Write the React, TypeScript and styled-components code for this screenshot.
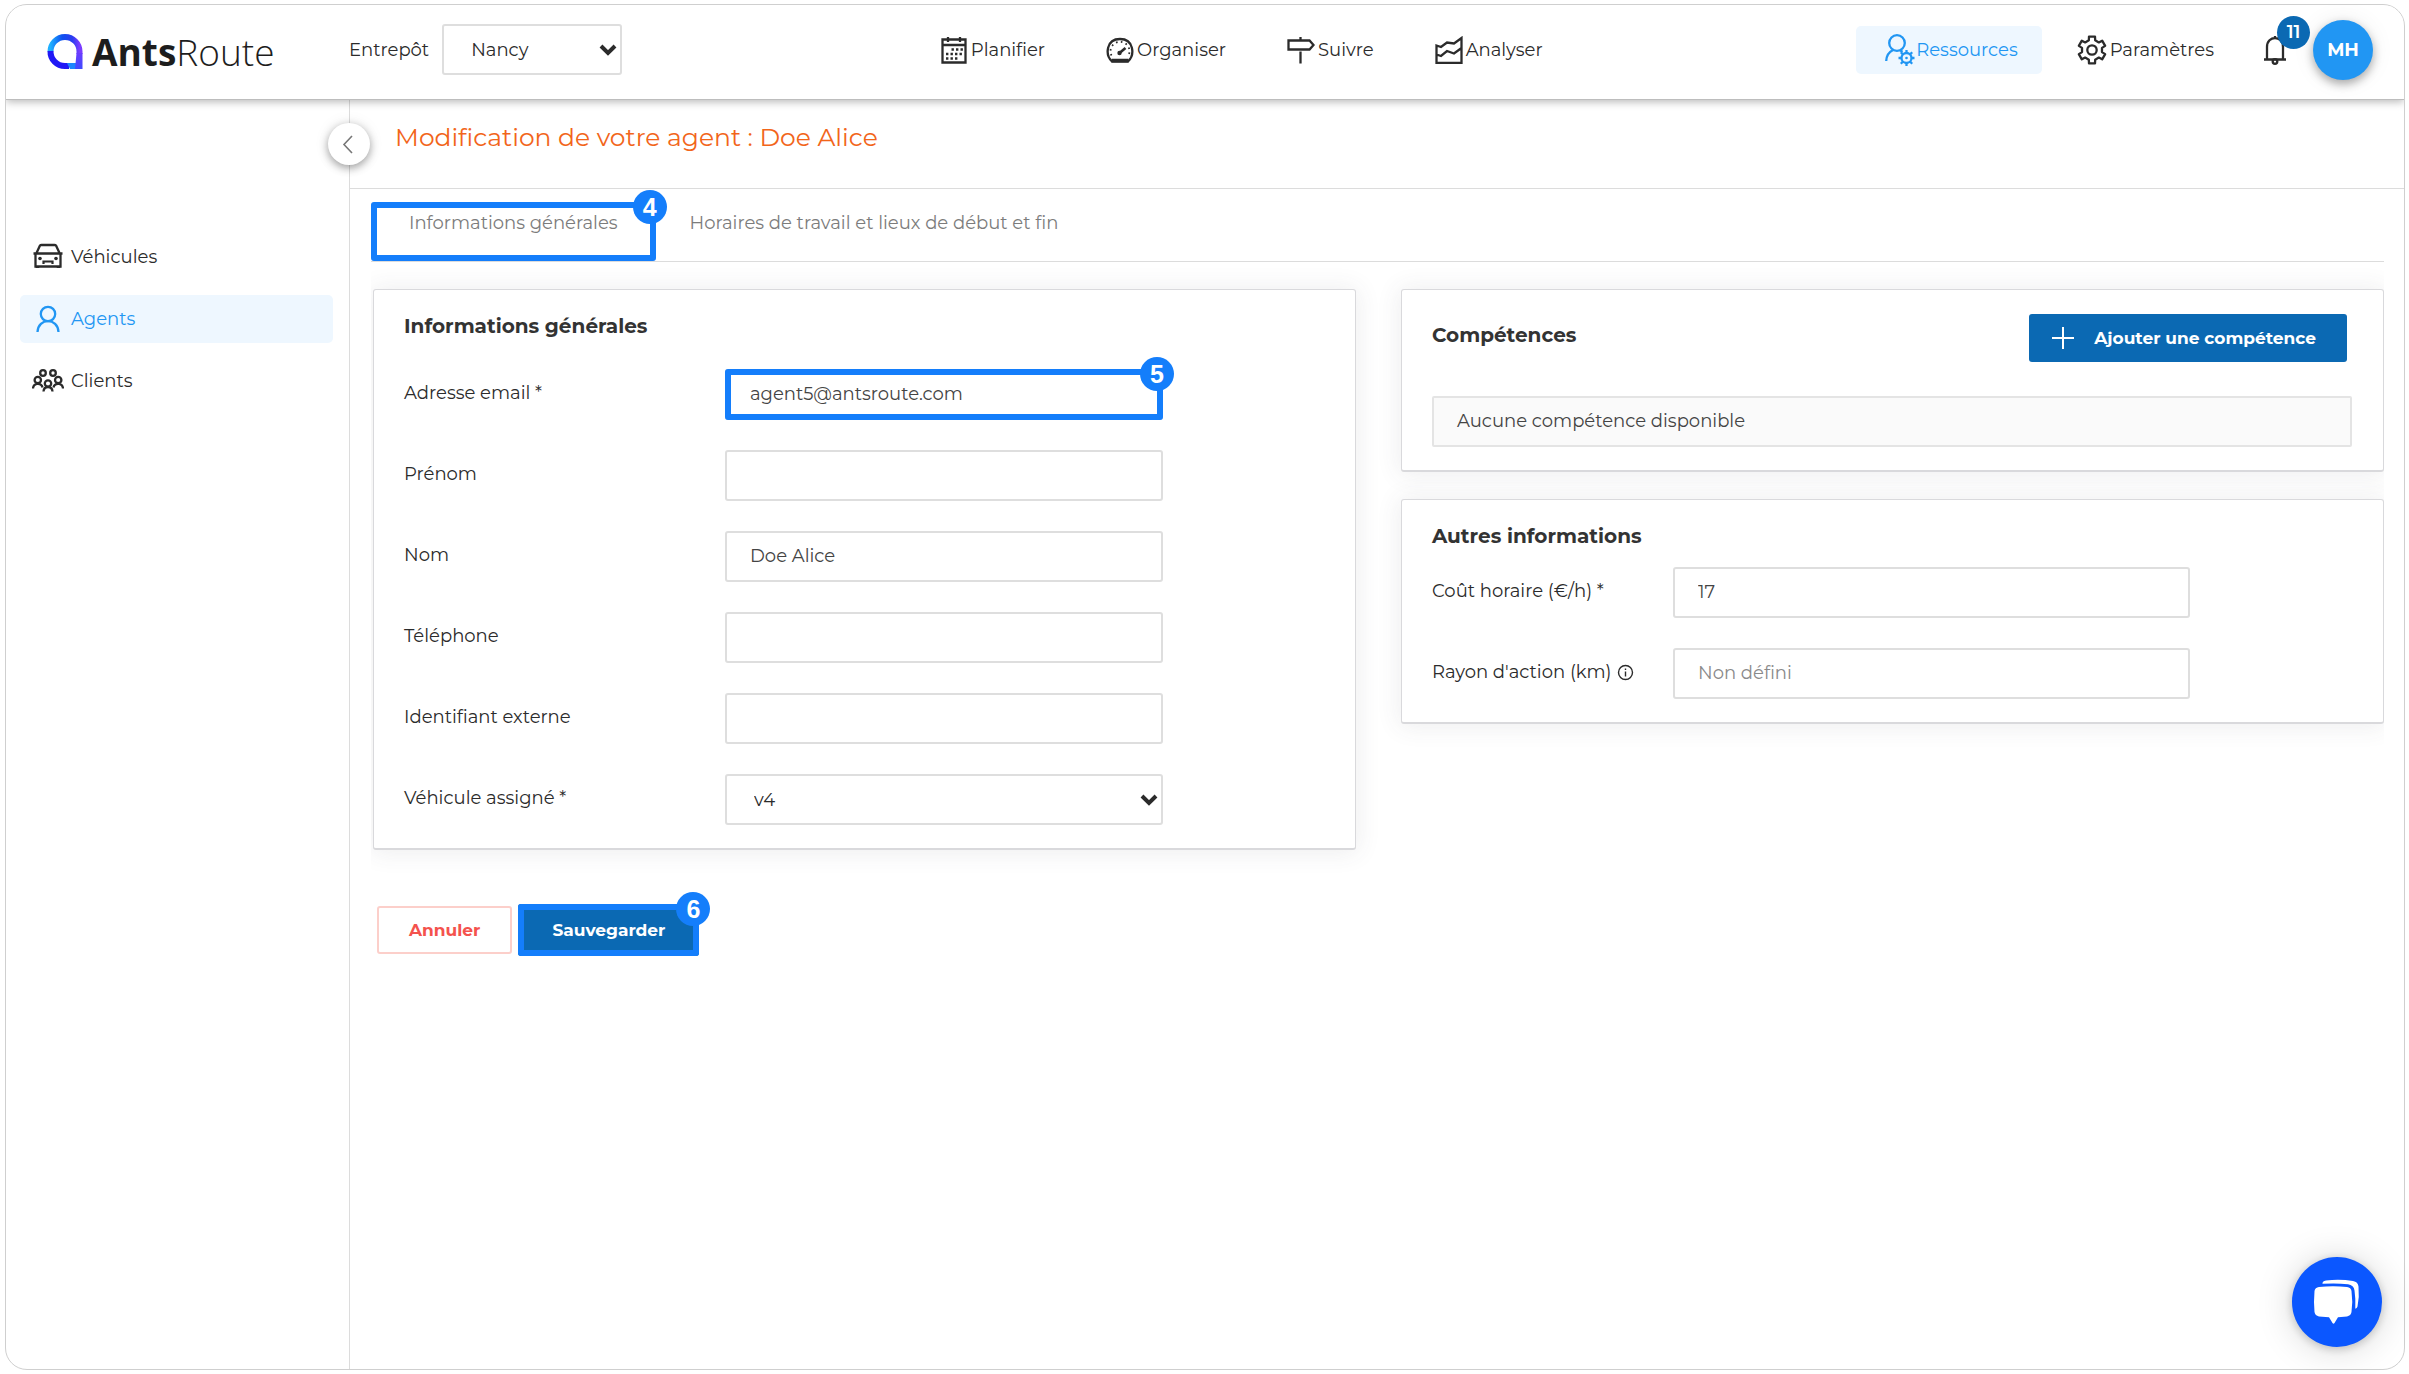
import React from 'react';
import styled, { createGlobalStyle, css } from 'styled-components';

const color = {
  text: '#2b2b2b',
  muted: '#7c7c7c',
  line: '#dcdcdc',
  accent: '#2196f3',
  accentSoft: '#eef7ff',
  primary: '#0b69b3',
  orange: '#f2651a',
  danger: '#f4524d',
  mark: '#147efb',
};

const GlobalStyle = createGlobalStyle`
  *, *::before, *::after { box-sizing: border-box; }
  body {
    margin: 0;
    background: #fff;
    color: ${color.text};
    font-family: Montserrat, Inter, "Noto Sans", sans-serif;
    font-size: 18px;
    line-height: 24px;
  }
  button, input, select { font: inherit; color: inherit; margin: 0; }
  a { color: inherit; text-decoration: none; }
  h1, h2, ul { margin: 0; padding: 0; }
  ul { list-style: none; }
`;

/* ---------- frame ---------- */

const Page = styled.div`
  min-height: 100vh;
  padding: 4px 4px 4px 5px;
  display: flex;
`;

const Frame = styled.div`
  flex: 1;
  min-width: 0;
  display: flex;
  flex-direction: column;
  border: 1px solid #cfcfcf;
  border-radius: 22px;
  overflow: hidden;
`;

const Header = styled.header`
  position: relative;
  z-index: 2;
  display: flex;
  align-items: center;
  height: 95px;
  padding: 0 31px 5px 0;
  background: #fff;
  border-bottom: 1px solid #bdbdbd;
  box-shadow: 0 2px 8px rgba(0, 0, 0, 0.28);
`;

const Body = styled.div`
  flex: 1;
  display: flex;
`;

/* ---------- header ---------- */

const Brand = styled.a`
  display: flex;
  align-items: center;
  gap: 8px;
  width: 343px;
  padding: 4px 0 0 41px;
  font-family: "Open Sans", "Noto Sans", sans-serif;
  font-size: 37px;
  line-height: 48px;
  font-weight: 300;
  color: #1d1d1d;
  strong { font-weight: 700; }
`;

const Depot = styled.label`
  display: flex;
  align-items: center;
  gap: 13px;
`;

const SelectWrap = styled.span<{ $width?: string }>`
  position: relative;
  display: block;
  width: ${(p) => p.$width ?? '100%'};
  svg {
    position: absolute;
    right: 5px;
    top: 50%;
    margin-top: -8px;
    pointer-events: none;
  }
`;

const box = css`
  display: block;
  width: 100%;
  height: 51px;
  padding: 0 23px;
  background: #fff;
  border: 2px solid #dedede;
  border-radius: 3px;
  outline: none;
`;

const Select = styled.select`
  ${box}
  appearance: none;
  padding: 0 28px 0 27px;
`;

const Nav = styled.nav`
  flex: 1;
  display: flex;
  justify-content: center;
  gap: 61px;
  padding-left: 4px;
`;

const NavLink = styled.a<{ $active?: boolean }>`
  display: flex;
  align-items: center;
  gap: 3px;
  ${(p) =>
    p.$active &&
    css`
      height: 48px;
      padding: 0 24px 0 29px;
      gap: 0;
      border-radius: 5px;
      background: ${color.accentSoft};
      color: ${color.accent};
    `}
`;

const Tools = styled.div`
  display: flex;
  align-items: center;
  gap: 35px;
`;

const BellButton = styled.button`
  position: relative;
  display: flex;
  margin-left: 14px;
  padding: 0;
  border: 0;
  background: none;
`;

const Count = styled.span`
  position: absolute;
  left: 14px;
  top: -19px;
  width: 33px;
  height: 33px;
  border-radius: 50%;
  background: ${color.primary};
  color: #fff;
  font-size: 18px;
  font-weight: 600;
  line-height: 32px;
  text-align: center;
`;

const Avatar = styled.button`
  width: 60px;
  height: 60px;
  margin-left: -9px;
  padding: 0;
  border: 0;
  border-radius: 50%;
  background: ${color.accent};
  color: #fff;
  font-size: 18px;
  font-weight: 700;
  box-shadow: 0 4px 10px rgba(0, 0, 0, 0.32), 0 0 24px rgba(0, 0, 0, 0.07);
`;

/* ---------- sidebar ---------- */

const Sidebar = styled.aside`
  position: relative;
  flex: none;
  width: 344px;
  padding: 133px 16px 0 14px;
  border-right: 1px solid ${color.line};
`;

const SideList = styled.ul`
  display: flex;
  flex-direction: column;
  gap: 14px;
`;

const SideLink = styled.a<{ $active?: boolean }>`
  display: flex;
  align-items: center;
  gap: 7px;
  height: 48px;
  padding-left: 12px;
  border-radius: 5px;
  background: ${(p) => (p.$active ? color.accentSoft : 'none')};
  color: ${(p) => (p.$active ? color.accent : 'inherit')};
`;

const Collapse = styled.button`
  position: absolute;
  top: 23px;
  right: -21px;
  z-index: 1;
  display: flex;
  align-items: center;
  justify-content: center;
  width: 42px;
  height: 42px;
  padding: 0 3px 0 0;
  border: 0;
  border-radius: 50%;
  background: #fff;
  box-shadow: 0 3px 8px rgba(0, 0, 0, 0.35), 0 0 16px rgba(0, 0, 0, 0.08);
`;

/* ---------- content ---------- */

const Main = styled.main`
  flex: 1;
  min-width: 0;
`;

const TitleBar = styled.div`
  padding: 21px 45px 35px;
  border-bottom: 1px solid ${color.line};
`;

const Title = styled.h1`
  font-size: 25px;
  line-height: 32px;
  font-weight: 400;
  color: ${color.orange};
`;

const Content = styled.div`
  padding: 13px 20px 0 21px;
`;

const Tabs = styled.div`
  display: flex;
  border-bottom: 1px solid ${color.line};
`;

const Tab = styled.button`
  position: relative;
  height: 59px;
  padding: 0 38px 17px;
  border: 0;
  background: none;
  color: ${color.muted};
  & + & { padding-left: 34px; }
`;

const Outline = styled.span`
  position: absolute;
  inset: 0;
  border: 6px solid ${color.mark};
  border-radius: 3px;
  pointer-events: none;
`;

const Step = styled.span`
  position: absolute;
  top: -12px;
  right: -11px;
  width: 34px;
  height: 34px;
  border-radius: 50%;
  background: ${color.mark};
  color: #fff;
  font-family: "Liberation Sans", Arial, sans-serif;
  font-size: 25px;
  font-weight: 700;
  line-height: 34px;
  text-align: center;
`;

const Cards = styled.div`
  display: grid;
  grid-template-columns: 1fr 1fr;
  align-items: start;
  gap: 45px;
  padding: 27px 0 0 2px;
  clip-path: inset(0 0 -40px 0);
`;

const Column = styled.div`
  display: flex;
  flex-direction: column;
  gap: 27px;
`;

const Card = styled.section`
  padding: 24px 31px 23px 30px;
  background: #fff;
  border: 1px solid #d9d9dc;
  border-bottom-width: 2px;
  border-radius: 3px;
  box-shadow: 0 1px 24px 2px rgba(69, 65, 78, 0.09);
`;

const CardTitle = styled.h2`
  font-size: 20px;
  line-height: 24px;
  font-weight: 700;
  color: #333;
`;

const CardHead = styled.div`
  display: flex;
  align-items: center;
  justify-content: space-between;
  padding-right: 5px;
  margin-bottom: 34px;
  ${CardTitle} { padding-bottom: 6px; }
`;

const Fields = styled.div<{ $label: number; $top: number; $control: string }>`
  display: grid;
  grid-template-columns: ${(p) => p.$label}px ${(p) => p.$control};
  row-gap: 30px;
  align-items: center;
  margin-top: ${(p) => p.$top}px;
`;

const Label = styled.label`
  display: flex;
  align-items: center;
  gap: 6px;
  padding-bottom: 3px;
`;

const Control = styled.div`
  position: relative;
`;

const Input = styled.input`
  ${box}
  padding-bottom: 2px;
  color: #444;
  &::placeholder { color: #8a8a8a; opacity: 1; }
`;

const Empty = styled.p`
  margin: 0;
  padding: 11px 23px 12px;
  background: #fafafa;
  border: 2px solid #e4e4e4;
  border-radius: 2px;
  color: #444;
`;

const Button = styled.button<{ $kind: 'primary' | 'danger' }>`
  position: relative;
  display: flex;
  align-items: center;
  justify-content: center;
  gap: 20px;
  height: 48px;
  padding: 0 31px 0 23px;
  border-radius: 3px;
  font-size: 17px;
  font-weight: 700;
  ${(p) =>
    p.$kind === 'primary'
      ? css`
          border: 0;
          background: ${color.primary};
          color: #fff;
        `
      : css`
          padding: 0 30px;
          border: 2px solid #fccfca;
          background: #fff;
          color: ${color.danger};
        `}
`;

const SaveButton = styled(Button)`
  height: 52px;
  padding: 0 34px;
`;

const Actions = styled.div`
  display: flex;
  align-items: center;
  gap: 6px;
  padding: 54px 0 56px 6px;
`;

const Chat = styled.button`
  position: fixed;
  right: 27px;
  bottom: 27px;
  width: 90px;
  height: 90px;
  padding: 0;
  border: 0;
  border-radius: 50%;
  background: #0b57ff;
  box-shadow: 0 2px 10px rgba(0, 0, 0, 0.2), 0 2px 36px rgba(0, 0, 0, 0.17);
`;

/* ---------- icons ---------- */

const Icon = styled.svg.attrs({ 'aria-hidden': true, fill: 'none', stroke: 'currentColor', strokeWidth: 2.3 })`
  display: block;
  flex: none;
`;

function gear(cx: number, cy: number, teeth: number, outer: number, inner: number, top: number, foot: number) {
  const step = (Math.PI * 2) / teeth;
  const pts: string[] = [];
  for (let i = 0; i < teeth; i++) {
    const a = i * step - Math.PI / 2;
    [
      [-foot, inner],
      [-top, outer],
      [top, outer],
      [foot, inner],
    ].forEach(([k, r]) => {
      const t = a + (k * step) / 2;
      pts.push(`${(cx + r * Math.cos(t)).toFixed(2)} ${(cy + r * Math.sin(t)).toFixed(2)}`);
    });
  }
  return `M${pts.join('L')}Z`;
}

const LogoMark = () => (
  <svg width="37" height="36" viewBox="0 0 37 36" fill="none" aria-hidden="true">
    <defs>
      <linearGradient id="markTop" x1="0" y1="0" x2="1" y2="0">
        <stop offset="0" stopColor="#1fb0ff" />
        <stop offset="0.4" stopColor="#0f50f0" />
        <stop offset="0.75" stopColor="#2a3cf0" />
        <stop offset="1" stopColor="#7a3cff" />
      </linearGradient>
      <linearGradient id="markSide" x1="0" y1="0" x2="0" y2="1">
        <stop offset="0" stopColor="#6a3cff" />
        <stop offset="1" stopColor="#3f4bff" />
      </linearGradient>
    </defs>
    <path d="M3.5 17.500A14.500 14.500 0 0 1 32.500 17.500V20" stroke="url(#markTop)" strokeWidth="6" />
    <path d="M3.500 17A14.500 14.500 0 0 0 18 32H22" stroke="#2018f5" strokeWidth="6" />
    <path d="M20 29H30V35H23Z" fill="#1c86ff" />
    <path d="M29.500 19H35.500V35H28Z" fill="url(#markSide)" />
  </svg>
);

const Caret = () => (
  <Icon width="18" height="16" viewBox="0 0 18 16">
    <path d="M2 4 9 11 16 4" strokeWidth="4" />
  </Icon>
);

const CalendarIcon = () => (
  <Icon width="28" height="28" viewBox="0 0 28 28">
    <path d="M2.500 3.500H25.500V26.500H2.500ZM2.500 9H25.500M8 1V6M20 1V6" />
    <path d="M11.500 13.500H23M6 18H23M6 22.500H18" strokeWidth="2.400" strokeDasharray="2.400 2.100" />
  </Icon>
);

const GaugeIcon = () => (
  <Icon width="28" height="28" viewBox="0 0 28 28">
    <path d="M6 25.500C-1 19 0 3 14 3S29 19 22 25.500Z" />
    <path d="M5.500 24.500H22.500" strokeWidth="3.500" />
    <path d="M5.500 19.500A9.500 9.500 0 1 1 22.500 19.500" strokeDasharray="1.600 3.400" strokeWidth="1.800" />
    <path d="M13.500 17 19.500 12" strokeWidth="2.600" />
    <circle cx="13.500" cy="17" r="2.200" fill="currentColor" stroke="none" />
  </Icon>
);

const SignIcon = () => (
  <Icon width="28" height="28" viewBox="0 0 28 28">
    <path d="M1.500 4.500H22.500L26.500 9 22.500 13.500H1.500ZM13.500 1V4.500M13.500 15.500V27.500" />
  </Icon>
);

const ChartIcon = () => (
  <Icon width="28" height="28" viewBox="0 0 28 28">
    <path d="M1.500 27V9.500L6 11 12 6.500 19 7.500 26.500 2V27ZM1.500 18.500 6 20 12 15 19 17.500 26.500 12" />
  </Icon>
);

const ResourceIcon = () => (
  <Icon width="31" height="34" viewBox="0 0 31 34">
    <circle cx="12" cy="10" r="7.800" />
    <path d="M1.200 28C1.500 22 4 19 8 17M15 17 17.500 19" />
    <circle cx="21.500" cy="25" r="5" />
    <circle cx="21.500" cy="25" r="1.300" fill="currentColor" stroke="none" />
    <path
      d="M21.500 17V20M21.500 30V33M13.500 25H16.500M26.500 25H29.500M15.800 19.300 18 21.500M25 28.500 27.200 30.700M27.200 19.300 25 21.500M18 28.500 15.800 30.700"
      strokeWidth="2.300"
    />
  </Icon>
);

const SettingsIcon = () => (
  <Icon width="30" height="30" viewBox="0 0 30 30" strokeLinejoin="round">
    <path d={gear(15, 15, 6, 13.8, 10.2, 0.42, 0.6)} />
    <circle cx="15" cy="15" r="4.700" />
  </Icon>
);

const BellIcon = () => (
  <Icon width="24" height="30" viewBox="0 0 24 30">
    <path d="M4 24.500V12C4 0 20 0 20 12V24.500M1 24.500H23M12 3.500V1" />
    <circle cx="12" cy="26.500" r="2.300" />
  </Icon>
);

const CarIcon = () => (
  <Icon width="32" height="28" viewBox="0 0 32 28">
    <path d="M4.500 10 8 2.500Q8.500 2 9.500 2H22.500Q23.500 2 24 2.500L27.500 10M1.500 10.500H30.500M3.500 10.500V23.500H28.500V10.500" />
    <path d="M5.500 23.500V25M26.500 23.500V25" strokeWidth="3.500" />
    <path d="M11.500 21V18.500H20.500V21" strokeWidth="2.200" />
    <circle cx="8" cy="15.500" r="1.800" fill="currentColor" stroke="none" />
    <circle cx="24" cy="15.500" r="1.800" fill="currentColor" stroke="none" />
  </Icon>
);

const AgentIcon = () => (
  <Icon width="32" height="28" viewBox="0 0 32 28">
    <circle cx="16" cy="9" r="7.200" />
    <path d="M5.500 27C6 12.500 26 12.500 26.500 27" />
  </Icon>
);

const ClientsIcon = () => (
  <Icon width="32" height="28" viewBox="0 0 32 28">
    <circle cx="11" cy="6" r="2.800" />
    <circle cx="21" cy="6" r="2.800" />
    <circle cx="5.800" cy="13" r="3.200" />
    <circle cx="26.200" cy="13" r="3.200" />
    <circle cx="16" cy="16.500" r="3.200" />
    <path d="M1 21.500C1.500 15.500 9.500 15.500 10.500 20.500M21.500 20.500C22.500 15.500 30.500 15.500 31 21.500M11.500 24.500C12 18.500 20 18.500 20.500 24.500" />
  </Icon>
);

const InfoIcon = () => (
  <Icon width="17" height="17" viewBox="0 0 17 17">
    <circle cx="8.500" cy="8.500" r="7" strokeWidth="1.400" />
    <path d="M8.500 7.500V12.500M8.500 4.500V6" strokeWidth="1.400" />
  </Icon>
);

const PlusIcon = () => (
  <Icon width="22" height="22" viewBox="0 0 22 22">
    <path d="M11 0V22M0 11H22" strokeWidth="2" />
  </Icon>
);

const BackIcon = () => (
  <Icon width="11" height="19" viewBox="0 0 11 19">
    <path d="M10 1 2 9.500 10 18" stroke="#777" strokeWidth="1.600" />
  </Icon>
);

const ChatIcon = () => (
  <svg width="90" height="90" viewBox="0 0 90 90" fill="#fff" aria-hidden="true">
    <path d="M27 30Q41 28.500 55 30Q59 30.500 59.500 34Q61 45 59.500 55Q59 58.500 55 59.500L46 60.300 42.500 66Q41.500 67.500 40.500 66L37 60.300 27 59.500Q23 58.500 22.500 55Q21.500 45 22.500 34Q23 30.500 27 30Z" />
    <path d="M30.500 25.800Q31 24 34 23.500Q48 22 61 24Q66 24.800 66.500 29.500Q67.500 40 65.500 49.500Q65 51.500 63.300 51.800Q63.800 42 62.500 33.500Q61.800 28 56 27.200Q44 25.800 30.500 26.800Z" />
  </svg>
);

/* ---------- data ---------- */

const navItems = [
  { label: 'Planifier', icon: <CalendarIcon /> },
  { label: 'Organiser', icon: <GaugeIcon /> },
  { label: 'Suivre', icon: <SignIcon /> },
  { label: 'Analyser', icon: <ChartIcon /> },
];

const sideItems = [
  { label: 'Véhicules', icon: <CarIcon /> },
  { label: 'Agents', icon: <AgentIcon />, active: true },
  { label: 'Clients', icon: <ClientsIcon /> },
];

const identityFields = [
  { id: 'email', label: 'Adresse email *', value: 'agent5@antsroute.com', step: 5 },
  { id: 'firstname', label: 'Prénom', value: '' },
  { id: 'lastname', label: 'Nom', value: 'Doe Alice' },
  { id: 'phone', label: 'Téléphone', value: '' },
  { id: 'external', label: 'Identifiant externe', value: '' },
];

const Marker = ({ step }: { step: number }) => (
  <>
    <Outline />
    <Step>{step}</Step>
  </>
);

export default function App() {
  return (
    <>
      <GlobalStyle />
      <Page>
        <Frame>
          <Header>
            <Brand href="#">
              <LogoMark />
              <span>
                <strong>Ants</strong>Route
              </span>
            </Brand>
            <Depot>
              Entrepôt
              <SelectWrap $width="180px">
                <Select defaultValue="Nancy">
                  <option>Nancy</option>
                </Select>
                <Caret />
              </SelectWrap>
            </Depot>
            <Nav>
              {navItems.map((item) => (
                <NavLink href="#" key={item.label}>
                  {item.icon}
                  {item.label}
                </NavLink>
              ))}
            </Nav>
            <Tools>
              <NavLink href="#" $active>
                <ResourceIcon />
                Ressources
              </NavLink>
              <NavLink href="#">
                <SettingsIcon />
                Paramètres
              </NavLink>
              <BellButton type="button" aria-label="Notifications">
                <BellIcon />
                <Count>11</Count>
              </BellButton>
              <Avatar type="button">MH</Avatar>
            </Tools>
          </Header>
          <Body>
            <Sidebar>
              <Collapse type="button" aria-label="Réduire le menu">
                <BackIcon />
              </Collapse>
              <SideList>
                {sideItems.map((item) => (
                  <li key={item.label}>
                    <SideLink href="#" $active={item.active}>
                      {item.icon}
                      {item.label}
                    </SideLink>
                  </li>
                ))}
              </SideList>
            </Sidebar>
            <Main>
              <TitleBar>
                <Title>Modification de votre agent : Doe Alice</Title>
              </TitleBar>
              <Content>
                <Tabs>
                  <Tab type="button">
                    Informations générales
                    <Marker step={4} />
                  </Tab>
                  <Tab type="button">Horaires de travail et lieux de début et fin</Tab>
                </Tabs>
                <Cards>
                  <Card>
                    <CardTitle>Informations générales</CardTitle>
                    <Fields $label={321} $top={31} $control="minmax(0, 438px)">
                      {identityFields.map((f) => (
                        <React.Fragment key={f.id}>
                          <Label htmlFor={f.id}>{f.label}</Label>
                          <Control>
                            <Input id={f.id} type="text" defaultValue={f.value} />
                            {f.step && <Marker step={f.step} />}
                          </Control>
                        </React.Fragment>
                      ))}
                      <Label htmlFor="vehicle">Véhicule assigné *</Label>
                      <SelectWrap>
                        <Select id="vehicle" defaultValue="v4">
                          <option>v4</option>
                        </Select>
                        <Caret />
                      </SelectWrap>
                    </Fields>
                  </Card>
                  <Column>
                    <Card>
                      <CardHead>
                        <CardTitle>Compétences</CardTitle>
                        <Button type="button" $kind="primary">
                          <PlusIcon />
                          Ajouter une compétence
                        </Button>
                      </CardHead>
                      <Empty>Aucune compétence disponible</Empty>
                    </Card>
                    <Card>
                      <CardTitle>Autres informations</CardTitle>
                      <Fields $label={241} $top={19} $control="minmax(0, 517px)">
                        <Label htmlFor="cost">Coût horaire (€/h) *</Label>
                        <Input id="cost" type="text" defaultValue="17" />
                        <Label htmlFor="radius">
                          Rayon d'action (km)
                          <InfoIcon />
                        </Label>
                        <Input id="radius" type="text" placeholder="Non défini" />
                      </Fields>
                    </Card>
                  </Column>
                </Cards>
                <Actions>
                  <Button type="button" $kind="danger">
                    Annuler
                  </Button>
                  <SaveButton type="submit" $kind="primary">
                    Sauvegarder
                    <Marker step={6} />
                  </SaveButton>
                </Actions>
              </Content>
            </Main>
          </Body>
        </Frame>
      </Page>
      <Chat type="button" aria-label="Ouvrir la discussion">
        <ChatIcon />
      </Chat>
    </>
  );
}
